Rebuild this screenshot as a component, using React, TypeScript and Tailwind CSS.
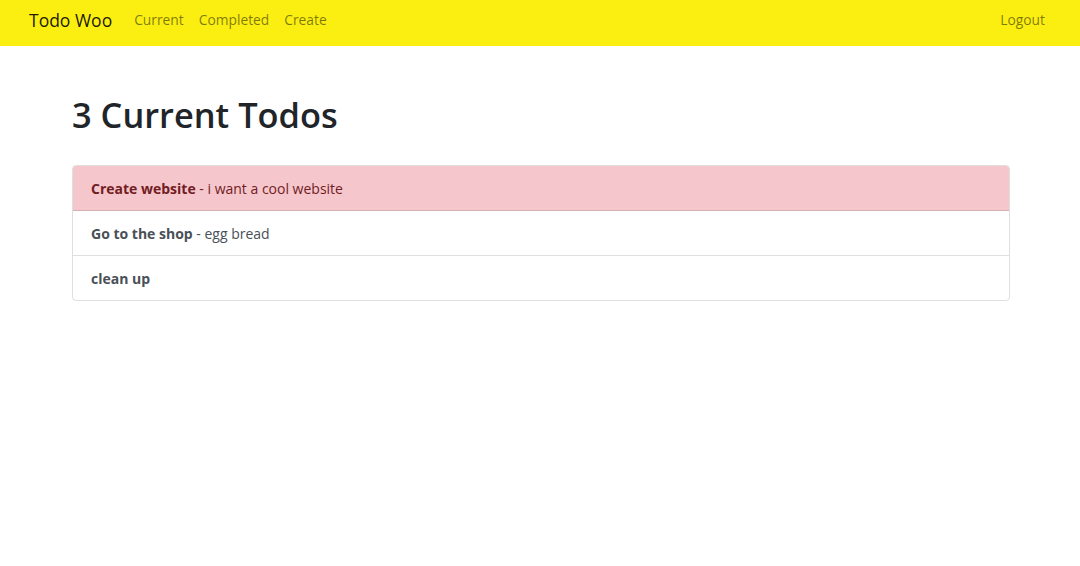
export default function App() {
  const font = { fontFamily: '"Open Sans", "Noto Sans", sans-serif' };
  return (
    <div className="min-h-[566px] bg-white" style={font}>
      <nav className="flex h-[46px] items-center bg-[#fbee11] pb-[6px] pl-[29px] pr-[35px]">
        <span className="mr-[22px] text-[17.5px] text-black/90">Todo Woo</span>
        <div className="flex gap-[15px] text-[13.8px] text-black/50">
          <span>Current</span>
          <span>Completed</span>
          <span>Create</span>
        </div>
        <div className="ml-auto text-[13.8px] text-black/50">Logout</div>
      </nav>
      <div className="ml-[72px] mr-[70px]">
        <h1 className="mt-[45px] text-[34.4px] font-semibold leading-[48px] text-[#212529]">3 Current Todos</h1>
        <ul className="mt-[26px] overflow-hidden rounded-[4px] border border-black/[0.125] text-[14px]">
          <li className="flex h-[45px] items-center border-b border-black/[0.125] bg-[#f5c6cb] px-[18px] text-[#721c24]">
            <b className="font-bold">Create website</b>&nbsp;- i want a cool website
          </li>
          <li className="flex h-[45px] items-center border-b border-black/[0.125] px-[18px] text-[#495057]">
            <b className="font-bold">Go to the shop</b>&nbsp;- egg bread
          </li>
          <li className="flex h-[44px] items-center px-[18px] text-[#495057]">
            <b className="font-bold">clean up</b>
          </li>
        </ul>
      </div>
    </div>
  );
}
